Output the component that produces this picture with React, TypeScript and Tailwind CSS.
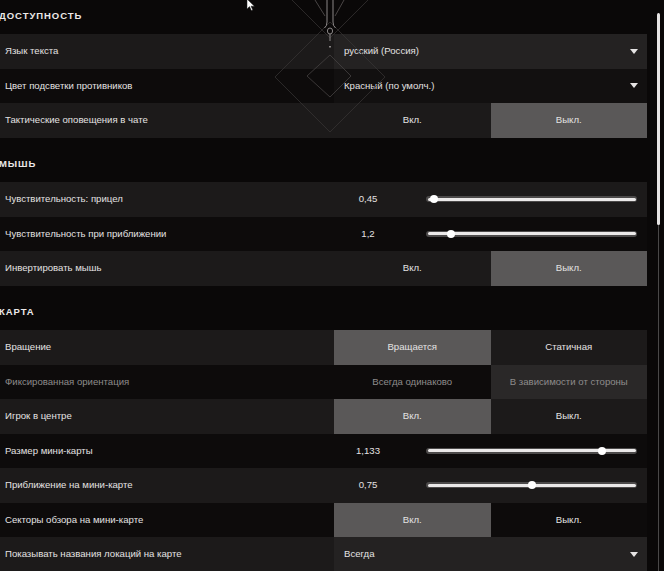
import React from 'react'

type Row =
  | { kind: 'select'; label: string; value: string }
  | { kind: 'toggle'; label: string; options: [string, string]; active: 0 | 1; disabled?: boolean }
  | { kind: 'slider'; label: string; value: string; pos: number }

type Section = { title: string; rows: Row[] }

const sections: Section[] = [
  {
    title: 'Доступность',
    rows: [
      { kind: 'select', label: 'Язык текста', value: 'русский (Россия)' },
      { kind: 'select', label: 'Цвет подсветки противников', value: 'Красный (по умолч.)' },
      { kind: 'toggle', label: 'Тактические оповещения в чате', options: ['Вкл.', 'Выкл.'], active: 1 },
    ],
  },
  {
    title: 'Мышь',
    rows: [
      { kind: 'slider', label: 'Чувствительность: прицел', value: '0,45', pos: 3.8 },
      { kind: 'slider', label: 'Чувствительность при приближении', value: '1,2', pos: 11.8 },
      { kind: 'toggle', label: 'Инвертировать мышь', options: ['Вкл.', 'Выкл.'], active: 1 },
    ],
  },
  {
    title: 'Карта',
    rows: [
      { kind: 'toggle', label: 'Вращение', options: ['Вращается', 'Статичная'], active: 0 },
      {
        kind: 'toggle',
        label: 'Фиксированная ориентация',
        options: ['Всегда одинаково', 'В зависимости от стороны'],
        active: 1,
        disabled: true,
      },
      { kind: 'toggle', label: 'Игрок в центре', options: ['Вкл.', 'Выкл.'], active: 0 },
      { kind: 'slider', label: 'Размер мини-карты', value: '1,133', pos: 83.5 },
      { kind: 'slider', label: 'Приближение на мини-карте', value: '0,75', pos: 50 },
      { kind: 'toggle', label: 'Секторы обзора на мини-карте', options: ['Вкл.', 'Выкл.'], active: 0 },
      { kind: 'select', label: 'Показывать названия локаций на карте', value: 'Всегда' },
    ],
  },
]

function Caret() {
  return (
    <svg width="8" height="5" viewBox="0 0 8 5" className="shrink-0">
      <polygon points="0,0 8,0 4,5" fill="#e6e4e4" />
    </svg>
  )
}

function Control({ row, light }: { row: Row; light: boolean }) {
  if (row.kind === 'select') {
    return (
      <div
        className={`flex h-full items-center justify-between pl-[10px] pr-[9px] ${
          light ? 'bg-[#242222]' : 'bg-[#121010]'
        }`}
      >
        <span>{row.value}</span>
        <Caret />
      </div>
    )
  }

  if (row.kind === 'slider') {
    return (
      <div className="flex h-full items-center pr-[10px]">
        <span className="w-[68px] text-center">{row.value}</span>
        <div className="relative ml-[24px] flex-1">
          <div className="h-[6px] rounded-full bg-[#4c4a4a] p-[1.5px]">
            <div className="h-full rounded-full bg-[#ebe9e9]" />
          </div>
          <div
            className="absolute top-1/2 h-[8px] w-[8px] -translate-x-1/2 -translate-y-1/2 rounded-full bg-white"
            style={{ left: `${row.pos}%` }}
          />
        </div>
      </div>
    )
  }

  return (
    <div className="grid h-full grid-cols-2">
      {row.options.map((opt, i) => {
        const on = row.active === i
        let cls = ''
        if (on) cls = row.disabled ? 'bg-[#2a2828] text-[#8e8c8c]' : 'bg-[#5a5858]'
        else cls = row.disabled ? 'text-[#8e8c8c]' : ''
        return (
          <div key={opt} className={`flex items-center justify-center ${cls}`}>
            {opt}
          </div>
        )
      })}
    </div>
  )
}

function Decoration() {
  return (
    <svg
      width="140"
      height="140"
      viewBox="0 0 140 140"
      className="pointer-events-none absolute left-[260px] top-0"
    >
      <g fill="none" stroke="#3a3636" strokeWidth="0.7">
        <polygon points="70,22 125,77 70,132 15,77" />
        <line x1="32" y1="0" x2="70" y2="38" />
        <line x1="108" y1="0" x2="70" y2="38" />
      </g>
      <polygon points="70,55 91,76 70,97 47,76" fill="none" stroke="#454141" strokeWidth="0.8" />
      <g fill="none" stroke="#5a5656" strokeWidth="0.8">
        <line x1="55" y1="0" x2="65" y2="16" />
        <line x1="84" y1="0" x2="75" y2="16" />
      </g>
      <g fill="none" stroke="#8a8686" strokeWidth="1">
        <path d="M67 0 V22 Q67 26 64.5 28" />
        <path d="M73 0 V22 Q73 26 75.5 28" />
        <ellipse cx="70" cy="31" rx="2.6" ry="3" />
        <line x1="70" y1="34" x2="70" y2="41" />
      </g>
      <rect x="69" y="46" width="2" height="1.5" fill="#8a8686" />
    </svg>
  )
}

function Cursor() {
  return (
    <svg width="10" height="13" viewBox="0 0 10 13" className="pointer-events-none absolute left-[246px] top-[-1px]">
      <path d="M1 0 V10 L3.5 7.6 L5.4 11.6 L6.8 11 L5 7.2 H8.4 Z" fill="#ffffff" stroke="#222" strokeWidth="0.5" />
    </svg>
  )
}

export default function App() {
  return (
    <div
      className="relative flex h-[571px] w-[664px] overflow-hidden bg-[#0a0808] text-[9.6px] text-[#e4e2e2]"
      style={{ fontFamily: '"Liberation Sans", Arial, sans-serif' }}
    >
      <div className="w-[647px]">
        {sections.map((section, s) => (
          <div key={section.title} className={s === 0 ? '' : 'mt-[10.5px]'}>
            <div className="-ml-[1px] flex h-[34px] items-center pb-[2px] text-[9.5px] font-bold uppercase tracking-[0.1em] text-[#ece9e9]">
              {section.title}
            </div>
            {section.rows.map((row, i) => {
              const light = i % 2 === 0
              const disabled = row.kind === 'toggle' && row.disabled
              return (
                <div
                  key={row.label}
                  className={`grid h-[34.5px] grid-cols-[334px_1fr] ${light ? 'bg-[#1c1a1a]' : 'bg-[#0d0b0b]'}`}
                >
                  <div className={`flex items-center pl-[5px] ${disabled ? 'text-[#8e8c8c]' : ''}`}>{row.label}</div>
                  <Control row={row} light={light} />
                </div>
              )
            })}
          </div>
        ))}
      </div>

      {/* scrollbar */}
      <div className="relative flex-1">
        <div className="absolute bottom-0 left-[11px] top-[13px] w-[1px] bg-[#4a4848]" />
        <div className="absolute left-[10px] top-[13px] h-[212px] w-[3px] rounded-full bg-[#e6e4e4]" />
      </div>

      <Decoration />
      <Cursor />
    </div>
  )
}
